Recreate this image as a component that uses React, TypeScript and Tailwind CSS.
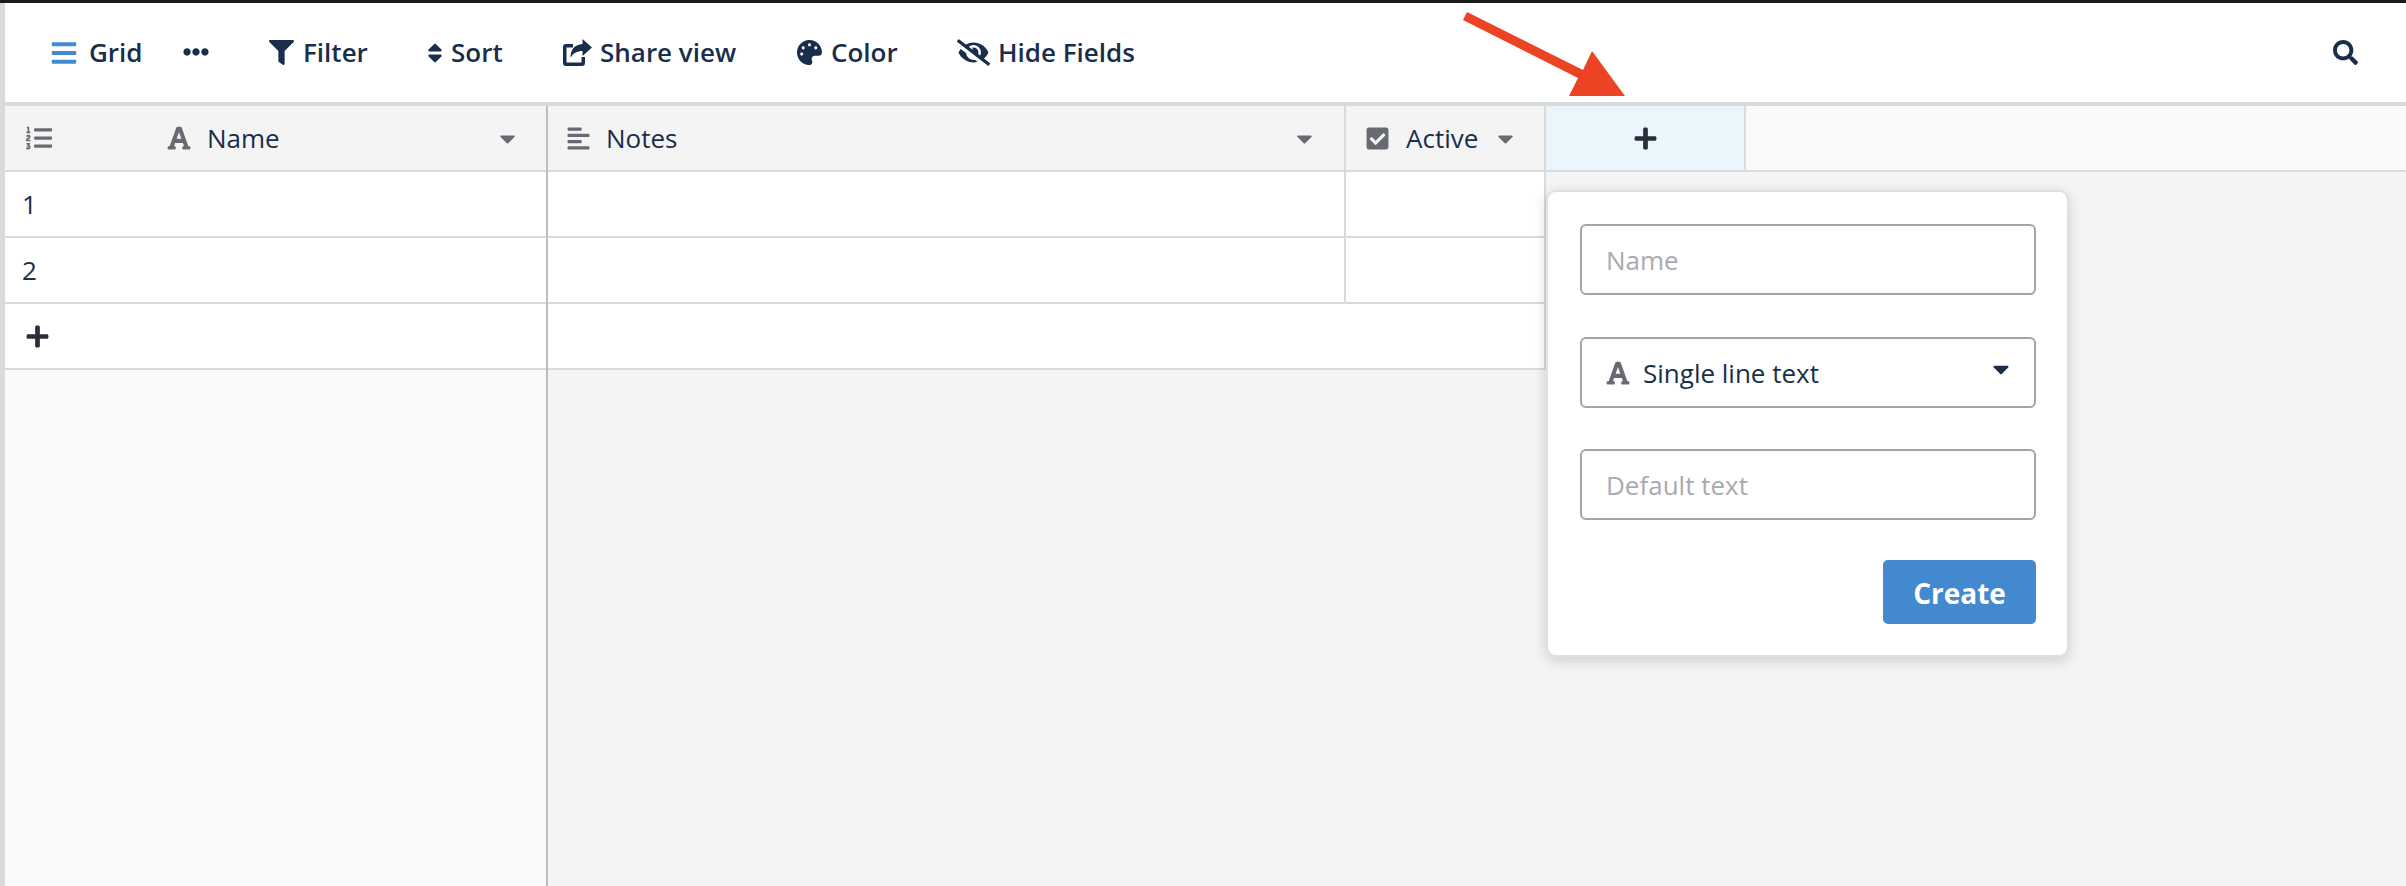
import {
  FaBars,
  FaEllipsisH,
  FaFilter,
  FaSort,
  FaPalette,
  FaEyeSlash,
  FaSearch,
  FaListOl,
  FaFont,
  FaCaretDown,
  FaAlignLeft,
  FaCheckSquare,
  FaPlus,
} from "react-icons/fa";
import type { ReactNode } from "react";

function ShareIcon() {
  return (
    <svg width="29" height="27" viewBox="0 0 29 27" fill="currentColor">
      <path d="M10 5H3a3 3 0 0 0-3 3v16a3 3 0 0 0 3 3h16a3 3 0 0 0 3-3v-6h-3.500v5.500h-15v-15H10z" />
      <path d="M29 8.500 19.500 0v5C12 5.500 7.500 10 7.500 19c2.500-5 6.500-7 12-7v5z" />
    </svg>
  );
}

function ToolItem({ icon, label, className, iconBox }: { icon: ReactNode; label: string; className: string; iconBox: string }) {
  return (
    <div className={`flex items-center ${className}`}>
      <div className={`flex items-center ${iconBox}`}>{icon}</div>
      <span className="-translate-y-[1px] text-[26px] font-semibold leading-none">{label}</span>
    </div>
  );
}

function Toolbar() {
  return (
    <div className="flex h-[99px] items-center bg-white pl-[45px] pr-[48px] text-[#192e4a]">
      <ToolItem icon={<FaBars className="text-[#4389d0]" size={28} />} label="Grid" className="w-[133px]" iconBox="w-[39px]" />
      <FaEllipsisH size={26} className="mr-[60px] -translate-y-[1px]" />
      <ToolItem icon={<FaFilter size={25} />} label="Filter" className="w-[159px]" iconBox="w-[34px]" />
      <ToolItem icon={<FaSort size={24} className="-ml-[5px]" />} label="Sort" className="w-[135px]" iconBox="w-[23px]" />
      <ToolItem icon={<ShareIcon />} label="Share view" className="w-[234px]" iconBox="w-[37px]" />
      <ToolItem icon={<FaPalette size={25} />} label="Color" className="w-[160px]" iconBox="w-[34px]" />
      <ToolItem icon={<FaEyeSlash size={33} />} label="Hide Fields" className="" iconBox="w-[41px]" />
      <FaSearch size={25} className="ml-auto" />
    </div>
  );
}

function Cell({ children, className }: { children?: ReactNode; className: string }) {
  return <div className={`flex h-[66px] items-center border-b-2 border-[#d9dadc] ${className}`}>{children}</div>;
}

function LeftColumn() {
  return (
    <div className="w-[543px] shrink-0 border-r-2 border-[#bcbec4] text-[#192e4a]">
      <Cell className="bg-[#f4f4f4] pl-[21px] pr-[26px]">
        <FaListOl size={26} className="text-[#676a73]" />
        <FaFont size={26} className="ml-[114px] text-[#676a73]" />
        <span className="ml-[15px] text-[26px] leading-none">Name</span>
        <FaCaretDown size={25} className="ml-auto text-[#676a73]" />
      </Cell>
      {["1", "2"].map((n) => (
        <Cell key={n} className="bg-white pl-[17px]">
          <span className="text-[26px] leading-none">{n}</span>
        </Cell>
      ))}
      <Cell className="bg-white pl-[20px]">
        <FaPlus size={25} className="text-[#2a2e38]" />
      </Cell>
    </div>
  );
}

function RightColumns() {
  return (
    <div className="min-w-0 flex-1 text-[#192e4a]">
      <div className="flex h-[66px] border-b-2 border-[#d9dadc] bg-[#fafafa]">
        <div className="flex w-[798px] items-center border-r-2 border-[#d9dadc] bg-[#f4f4f4] pl-[18px] pr-[27px]">
          <FaAlignLeft size={25} className="text-[#676a73]" />
          <span className="ml-[15px] text-[26px] leading-none">Notes</span>
          <FaCaretDown size={25} className="ml-auto text-[#676a73]" />
        </div>
        <div className="flex w-[200px] items-center border-r-2 border-[#d9dadc] bg-[#f4f4f4] pl-[19px]">
          <FaCheckSquare size={25} className="text-[#676a73]" />
          <span className="ml-[16px] text-[26px] leading-none">Active</span>
          <FaCaretDown size={25} className="ml-[15px] text-[#676a73]" />
        </div>
        <div className="flex w-[200px] items-center justify-center border-r-2 border-[#d9dadc] bg-[#ebf5fc]">
          <FaPlus size={25} className="text-[#2a2e38]" />
        </div>
      </div>
      {[0, 1].map((n) => (
        <div key={n} className="flex h-[66px] w-[998px] border-b-2 border-[#d9dadc] bg-white">
          <div className="w-[798px] border-r-2 border-[#d9dadc]" />
          <div className="flex-1 border-r-2 border-[#d9dadc]" />
        </div>
      ))}
      <div className="h-[66px] w-[998px] border-b-2 border-r-2 border-[#d9dadc] bg-white" />
    </div>
  );
}

function FieldPopup() {
  return (
    <div className="absolute left-[1546px] top-[190px] flex h-[467px] w-[523px] flex-col rounded-[10px] border-2 border-[#dfe0e2] bg-white pl-[32px] pr-[31px] pt-[32px] shadow-[0_4px_14px_rgba(0,0,0,0.16)]">
      <div className="flex h-[71px] items-center rounded-[6px] border-2 border-[#a3a5ab] pl-[24px] text-[26px] text-[#a9aaaf]">
        <span className="translate-y-[1px]">Name</span>
      </div>
      <div className="mt-[42px] flex h-[71px] items-center rounded-[6px] border-2 border-[#a3a5ab] pl-[23px] pr-[20px] text-[26px] text-[#192e4a]">
        <FaFont size={26} className="text-[#676a73]" />
        <span className="ml-[12px] translate-y-[1px]">Single line text</span>
        <FaCaretDown size={26} className="ml-auto -translate-y-[4px]" />
      </div>
      <div className="mt-[41px] flex h-[71px] items-center rounded-[6px] border-2 border-[#a3a5ab] pl-[24px] text-[26px] text-[#a9aaaf]">
        <span className="translate-y-[1px]">Default text</span>
      </div>
      <div className="mt-[40px] flex justify-end">
        <button className="h-[64px] w-[153px] rounded-[5px] bg-[#4389d0] pt-[2px] text-[28px] font-bold text-white">Create</button>
      </div>
    </div>
  );
}

function Arrow() {
  return (
    <svg className="absolute left-[1450px] top-0" width="180" height="100" viewBox="0 0 180 100">
      <path d="M17 12 133 70 142 51 175 96 119 96 128 78 13 20Z" fill="#ec4324" />
    </svg>
  );
}

export default function App() {
  return (
    <div className="relative h-[886px] w-[2406px] overflow-hidden bg-[#f4f4f4] font-['Open_Sans',sans-serif]">
      <div className="h-[3px] bg-[#1a1a1a]" />
      <div className="flex h-[883px] flex-col border-l-[5px] border-[#d9dadc]">
        <div className="border-b-4 border-[#d9dadc]">
          <Toolbar />
        </div>
        <div className="flex min-h-0 flex-1">
          <div className="flex flex-col">
            <LeftColumn />
            <div className="w-[543px] flex-1 border-r-2 border-[#bcbec4] bg-[#fafafa]" />
          </div>
          <RightColumns />
        </div>
      </div>
      <FieldPopup />
      <Arrow />
    </div>
  );
}
